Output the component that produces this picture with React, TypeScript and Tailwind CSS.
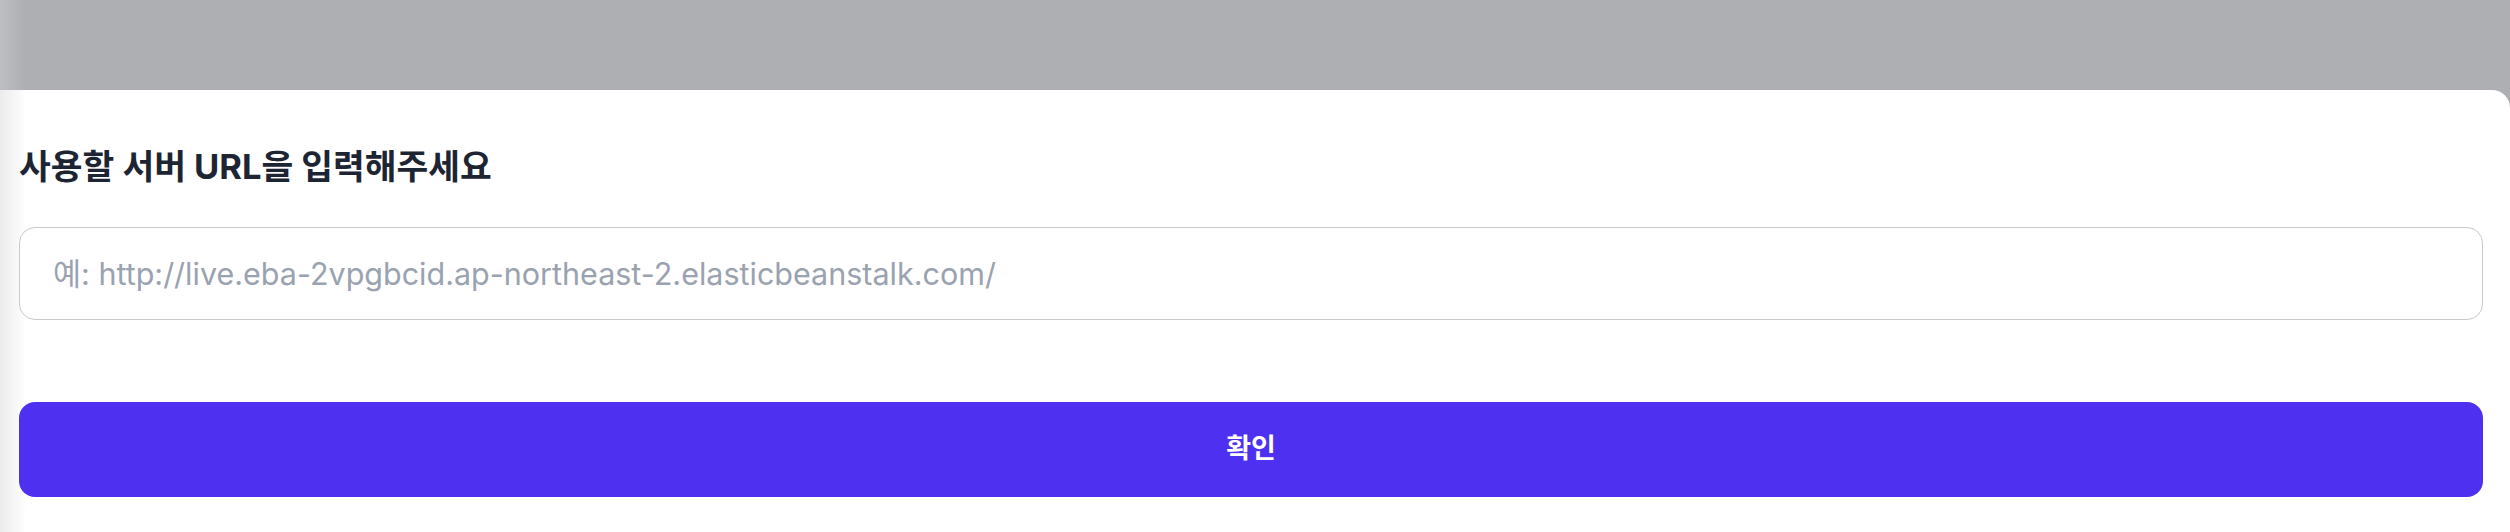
import React from 'react';

const font = { fontFamily: 'Inter, "Noto Sans CJK KR", sans-serif' };

export default function App() {
  return (
    <div className="w-full h-[532px] bg-[#aeafb3] flex flex-col overflow-hidden" style={font}>
      {/* dimmed page behind the sheet */}
      <div className="h-[90px] shrink-0 bg-[linear-gradient(to_right,#bdbec1,#aeafb3_24px)]" />

      {/* bottom sheet */}
      <div className="flex-1 flex flex-col rounded-tr-[18px] bg-[linear-gradient(to_right,#ebebeb,#ffffff_26px)] pl-[19px] pr-[27px]">
        <h2 className="pt-[57px] text-[34.5px] leading-[40px] font-bold text-[#1d2533]">
          사용할 서버 URL을 입력해주세요
        </h2>

        <input
          type="text"
          placeholder="예: http://live.eba-2vpgbcid.ap-northeast-2.elasticbeanstalk.com/"
          className="mt-[40px] h-[93px] w-full rounded-[16px] border-[1.5px] border-[#c8c9ce] bg-white pl-[33px] pr-6 text-[30.5px] text-[#1d2533] placeholder:text-[#9aa2b0] outline-none"
          style={font}
        />

        <button
          type="button"
          className="mt-[82px] h-[95px] w-full rounded-[16px] bg-[#4e30f1] text-[27px] font-bold text-white"
          style={font}
        >
          확인
        </button>
      </div>
    </div>
  );
}
